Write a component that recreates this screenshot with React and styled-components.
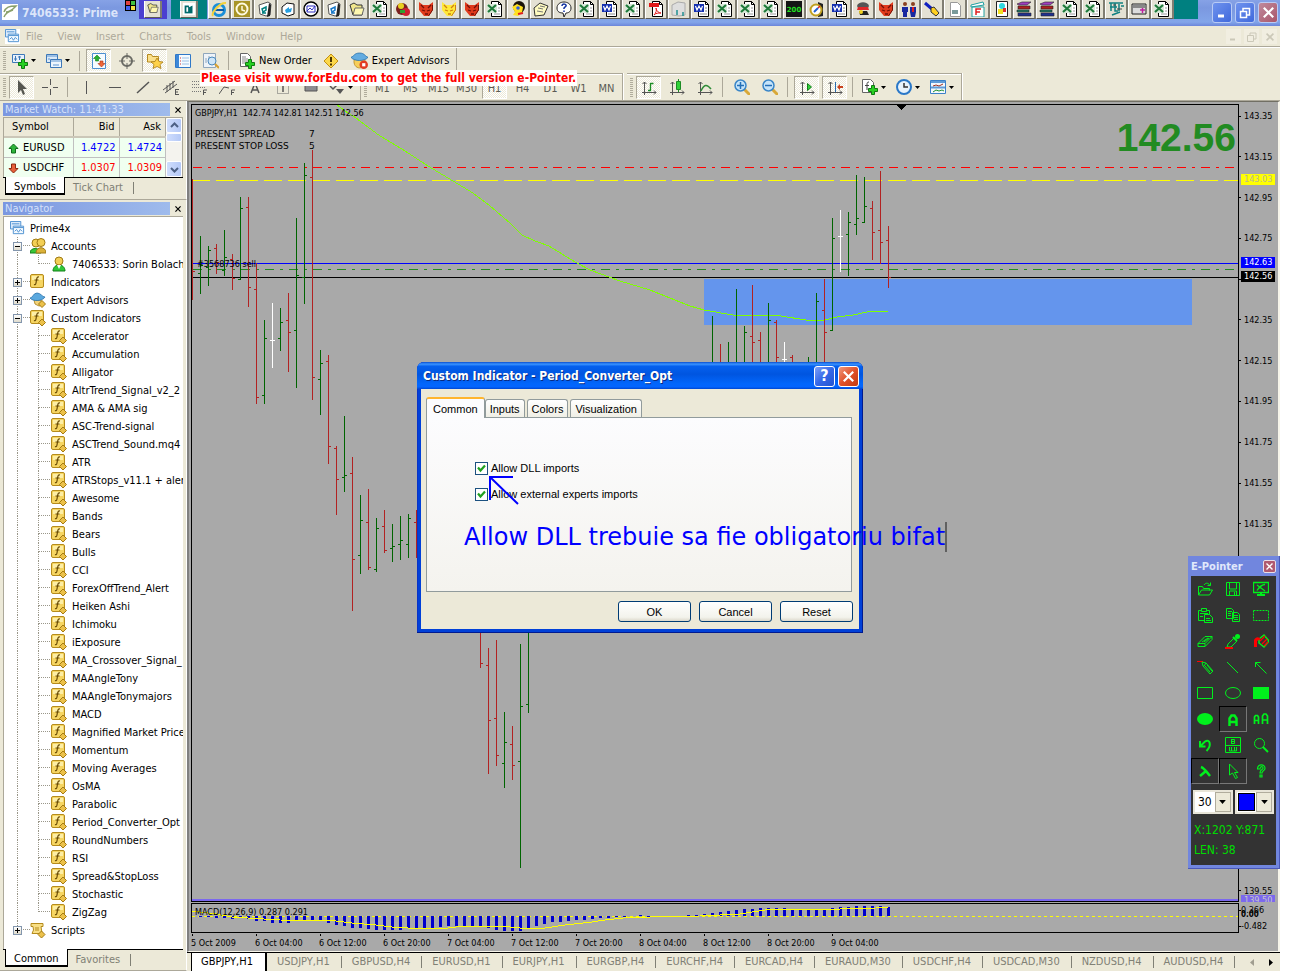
import React from 'react';
import styled, { createGlobalStyle, css } from 'styled-components';

const ui = '"DejaVu Sans Condensed", "DejaVu Sans", sans-serif';
const dialogFont = '"Liberation Sans", Arial, sans-serif';
const face = '#ece9d8';
const shade = '#aca899';

const GlobalStyle = createGlobalStyle`
  *, *::before, *::after { box-sizing: border-box; }
  body { margin: 0; background: #fff; font: 11px/14px ${ui}; color: #000; }
  button, select, input { font: inherit; color: inherit; margin: 0; padding: 0; }
  button { background: none; border: 0; white-space: nowrap; }
  ul { list-style: none; margin: 0; padding: 0; }
`;

/* ---------- shared pieces ---------- */

const Svg = styled.svg`
  display: block;
  flex: none;
  width: ${(p) => p.$w || 16}px;
  height: ${(p) => p.$h || p.$w || 16}px;
`;
const Icon = ({ size = 16, h, box = '0 0 16 16', children }) => (
  <Svg $w={size} $h={h} viewBox={box} fill="none" aria-hidden="true">{children}</Svg>
);

const Page = styled.div`
  position: relative;
  display: flex;
  flex-direction: column;
  min-height: 100vh;
  margin-right: 19px;
  background: ${face};
`;

/* ---------- title bar and shortcut strip ---------- */

const TitleBar = styled.header`
  display: flex;
  align-items: flex-start;
  height: 26px;
  overflow: hidden;
  background: linear-gradient(#86a2e6, #7b98e0 30%, #82a5e9 85%, #6b85da);
`;
const AppBadge = styled.span`
  margin: 4px 4px 0 2px;
  background: #fff;
`;
const AppTitle = styled.h1`
  flex: none;
  width: 101px;
  margin: 4px 0 0;
  overflow: hidden;
  white-space: nowrap;
  font: bold 12px/18px ${ui};
  color: #dbe5fa;
`;
const Strip = styled.nav`
  display: flex;
  flex: none;
  height: 19px;
`;
const StripPad = styled.span`
  display: flex;
  justify-content: center;
  width: ${(p) => p.$w}px;
  margin-right: ${(p) => p.$gap || 0}px;
  background: ${(p) => p.$bg || 'none'};
`;
const StripButton = styled.button`
  display: flex;
  justify-content: center;
  width: ${(p) => (p.$small ? 18 : 23)}px;
  height: ${(p) => (p.$small ? 17 : 19)}px;
  margin-top: ${(p) => (p.$small ? 1 : 0)}px;
  padding-top: 1px;
  background: #e4e1d4;
  border: solid;
  border-width: 0 2px 1px 1px;
  border-color: #fff #807d72 #5d5b55 #fff;
`;
const Captions = styled.div`
  display: flex;
  gap: 3px;
  margin: 2px 2px 0 auto;
`;
const Caption = styled.button`
  display: grid;
  place-items: center;
  width: 20px;
  height: 21px;
  border: 1px solid #b9cbf5;
  border-radius: 3px;
  background: ${(p) => (p.$close ? 'linear-gradient(135deg,#c08a9c,#a9566a)' : 'linear-gradient(135deg,#6f93ee,#4069dc)')};
`;

const Sheet = ({ children }) => (
  <>
    <path d="M4.500.5h7l3 3v12h-10z" fill="#fff" stroke="#000" />
    <path d="M11.500.5v3h3" stroke="#000" />
    {children}
  </>
);
const Fox = ({ a, b }) => (
  <>
    <path d="M1 1l4 3h6l4-3v8l-4 6H6L1 9z" fill={a} />
    <path d="M3 4l3 3M13 4l-3 3M4 9l3 1M12 9l-3 1M7 13h3" stroke={b} strokeWidth="1.300" />
    <path d="M14.500 4v5l-4 6" stroke={b} />
  </>
);
const Bin = ({ c = '#008080' }) => (
  <>
    <path d="M2 4l9-3 3 2-1 11-4 1-6-2z" fill="#fff" stroke="#555" />
    <path d="M12 2l2 2-1 11-3 1z" fill="#222" />
    <path d="M5 8l4-2v3l-3 2zM5 12h4" stroke={c} strokeWidth="1.500" />
  </>
);
const art = {
  ie: (
    <>
      <circle cx="8" cy="9" r="5.500" stroke="#1b8fd8" strokeWidth="3" />
      <path d="M3 9h10" stroke="#0a5aa8" strokeWidth="2" />
      <path d="M2 15C0 12 9 1 15 2" stroke="#f4d13a" strokeWidth="2" />
    </>
  ),
  clock: (
    <>
      <path d="M0 0h16v16H0z" fill="#a89426" />
      <circle cx="8" cy="8" r="5.500" stroke="#fffbe0" strokeWidth="2" />
      <path d="M8 5v4l3 1" stroke="#fffbe0" strokeWidth="1.500" />
    </>
  ),
  bin: <Bin />,
  binBlue: <Bin c="#1878c8" />,
  send: (
    <>
      <path d="M2 6l5-4 7 1v10l-6 2-6-3z" fill="#fff" stroke="#111" />
      <path d="M5 9l4-3v2l3-1-1 4-5 1z" fill="#28a0e0" />
    </>
  ),
  chat: (
    <>
      <circle cx="8" cy="8" r="7" fill="#fff" stroke="#000" strokeWidth="1.500" />
      <path d="M4 5h8v6H4zM4 10l3-3 2 2 3-4" stroke="#3030c0" />
    </>
  ),
  folder: (
    <>
      <path d="M1 4l4-2 3 2h5v10H4z" fill="#f0e68c" stroke="#333" />
      <path d="M4 14l2-7h9l-2 7z" fill="#fff8b0" stroke="#666" />
    </>
  ),
  xls: (
    <Sheet>
      <path d="M0 3h10v9H0z" fill="#d8e8d8" />
      <path d="M1 4l8 7M9 4l-8 7" stroke="#1f7a3a" strokeWidth="2.200" />
      <path d="M11 7h2M11 10h2M7 13h6" stroke="#9a9a9a" />
    </Sheet>
  ),
  doc: (
    <Sheet>
      <path d="M0 3h10v8H0z" fill="#1430b0" />
      <path d="M1.500 5l1.500 4 2-4 2 4 1.500-4" stroke="#fff" strokeWidth="1.200" />
      <path d="M11 7h2M11 10h2M6 13h7" stroke="#888" />
    </Sheet>
  ),
  ball: (
    <>
      <circle cx="7" cy="8" r="6" fill="#7a2020" />
      <circle cx="6" cy="5" r="3" fill="#e8d020" />
      <circle cx="11" cy="11" r="4" fill="#d02030" />
      <path d="M5 9h5v3H5z" fill="#30a030" />
    </>
  ),
  fox: <Fox a="#e03a1c" b="#701008" />,
  yfox: <Fox a="#ffe93a" b="#d08010" />,
  bird: (
    <>
      <circle cx="9" cy="6" r="6" fill="#1a1208" />
      <path d="M2 6l5-3 6 3-1 6-4 3-5-1 2-3z" fill="#ffe020" />
      <circle cx="8" cy="7" r="1.800" fill="#3060e0" />
      <path d="M8 13l5-1" stroke="#e02020" strokeWidth="2" />
    </>
  ),
  note: (
    <>
      <path d="M1 7l6-5 8 3-4 9-9 1z" fill="#fffbc0" stroke="#333" />
      <path d="M5 7l5 1M4 10l6 1M7 5l5 1" stroke="#777" />
    </>
  ),
  help: (
    <>
      <path d="M1 7c0-8 14-8 14 0 0 4-3 5-5 5l-2 4-1-4C4 12 1 11 1 7z" fill="#fff" stroke="#222" />
      <path d="M6 5c0-3 5-2 4 0L8 7v1M8 9.500v1.500" stroke="#1030a0" strokeWidth="1.500" />
    </>
  ),
  pdf: (
    <Sheet>
      <path d="M1 2h10v4H1z" fill="#e01818" />
      <path d="M6 14c2-2 3-5 2-7 0 3 3 5 5 5-3 0-5 0-7 2z" stroke="#e01818" />
    </Sheet>
  ),
  ghost: (
    <>
      <path d="M1 4l6-3 7 1v12l-6 1-7-1z" fill="#dedede" stroke="#aaa" />
      <path d="M6 9v5M12 11v4" stroke="#209090" strokeWidth="1.500" />
    </>
  ),
  two: (
    <>
      <path d="M0 0h16v16H0z" fill="#151515" />
      <text x="8" y="11" textAnchor="middle" fontSize="7" fontWeight="bold" fill="#20e020" fontFamily="DejaVu Sans">200</text>
    </>
  ),
  compass: (
    <>
      <path d="M9 1l5 2v12l-5 1z" fill="#222" />
      <circle cx="7" cy="9" r="5.500" fill="#fff" stroke="#c0a020" strokeWidth="2" />
      <path d="M5 11l4-4" stroke="#2060d0" strokeWidth="2" />
      <path d="M9 7l2-2" stroke="#e02020" strokeWidth="1.500" />
    </>
  ),
  cap: (
    <>
      <path d="M2 5c1-5 11-5 12 0l-2 4H4z" fill="#555" />
      <path d="M3 6h10l1 3H2z" fill="#e02828" />
      <path d="M4 10h8l2 4H5z" fill="#222" />
      <circle cx="6" cy="11" r="2" fill="#f0d020" />
    </>
  ),
  people: (
    <>
      <circle cx="4" cy="3" r="2" fill="#8a4020" />
      <circle cx="12" cy="3" r="2" fill="#8a4020" />
      <path d="M1 6h6v5H6v5H2v-5H1zM9 6h6v5l-1 5h-4l-1-5z" fill="#1828a0" />
      <path d="M12 6v5" stroke="#e02020" strokeWidth="2" />
    </>
  ),
  brush: (
    <>
      <path d="M1 2l7 6" stroke="#1020c0" strokeWidth="3" />
      <path d="M7 7l3-1 5 6-3 3-5-4z" fill="#ffd020" stroke="#333" />
    </>
  ),
  page: (
    <>
      <path d="M3.500 1.500h7l3 3v11h-10z" fill="#fff" stroke="#999" />
      <path d="M5 9h6v4H5z" fill="#7a9a9a" />
    </>
  ),
  film: (
    <>
      <path d="M1 4l12-3 1 3-13 2zM2 6h12v10H2z" fill="#fff" stroke="#20a0a0" />
      <path d="M6 14V8h5M6 11h4" stroke="#e02020" strokeWidth="1.500" />
    </>
  ),
  colors: (
    <>
      <path d="M3.500.5h11v15h-11z" fill="#fff" stroke="#222" />
      <circle cx="9" cy="5" r="3" fill="#30d8e0" />
      <path d="M5 8h5v5H5z" fill="#f0e020" />
      <path d="M10 7h3v4h-3z" fill="#e03030" />
    </>
  ),
  books: (
    <>
      <path d="M1 3l5-2h9l-4 3H3z" fill="#a040c0" stroke="#222" strokeWidth=".6" />
      <path d="M2 5h12v3H2z" fill="#b02020" stroke="#222" strokeWidth=".6" />
      <path d="M1 9h12v2H1z" fill="#20806a" stroke="#222" strokeWidth=".6" />
      <path d="M2 12h13v3H2z" fill="#203090" stroke="#222" strokeWidth=".6" />
    </>
  ),
  net: (
    <>
      <path d="M1 2h14M3 2v8M7 2v8h3M11 3v7M13 5h3M2 6h7M4 14l8-3" stroke="#108080" strokeWidth="1.500" />
      <path d="M5 4h3M9 8h5" stroke="#444" />
    </>
  ),
  card: (
    <>
      <path d="M1 3h14v10H1z" fill="#dcdcdc" stroke="#222" />
      <path d="M2 4h12v3H2z" fill="#888" />
      <path d="M9 9h5M11.500 7v5" stroke="#c020a0" strokeWidth="1.500" />
    </>
  ),
};
const shortcuts = [
  ['Internet Explorer', 'ie'], ['Clock', 'clock'], ['Recycle Bin', 'bin'], ['Send', 'send'], ['Messenger', 'chat'],
  ['Recycle', 'binBlue'], ['Folder', 'folder'], ['Workbook', 'xls'], ['Player', 'ball'], ['Fox', 'fox'], ['Yellow fox', 'yfox'],
  ['Fox 2', 'fox'], ['Workbook 2', 'xls'], ['Bird', 'bird'], ['Notes', 'note'], ['Help', 'help'], ['Workbook 3', 'xls'],
  ['Document', 'doc'], ['Workbook 4', 'xls'], ['PDF', 'pdf'], ['Paper', 'ghost'], ['Document 2', 'doc'], ['Workbook 5', 'xls'],
  ['Workbook 6', 'xls'], ['Workbook 7', 'xls'], ['Meter', 'two'], ['Compass', 'compass'], ['Document 3', 'doc'], ['Agent', 'cap'],
  ['Fox 3', 'fox'], ['People', 'people'], ['Brush', 'brush'], ['Page', 'page'], ['Film', 'film'], ['Colors', 'colors'],
  ['Archive', 'books'], ['Archive 2', 'books'], ['Workbook 8', 'xls'], ['Workbook 9', 'xls'], ['Network', 'net'], ['Card', 'card'],
  ['Workbook 10', 'xls'],
];

/* ---------- menu ---------- */

const MenuBar = styled.nav`
  display: flex;
  align-items: center;
  gap: 15px;
  height: 22px;
  padding: 0 3px 0 5px;
  border-bottom: 1px solid #fff;
  box-shadow: inset 0 -1px ${shade};
  color: ${shade};
`;
const MenuIcon = styled.span`
  margin-right: -9px;
  background: #fff;
`;
const MdiButtons = styled.div`
  display: flex;
  gap: 3px;
  margin-left: auto;
  color: #cbc8b8;
`;
const MdiButton = styled.button`
  display: grid;
  place-items: center;
  width: 15px;
  height: 15px;
  background: #f1eee1;
`;

/* ---------- toolbars ---------- */

const ToolRow = styled.div`
  display: flex;
  gap: ${(p) => p.$gap || 0}px;
  height: ${(p) => p.$h}px;
`;
const ToolGroup = styled.div`
  display: flex;
  align-items: center;
  gap: 3px;
  padding: 0 3px;
  ${(p) => p.$raised && css`
    border-top: 1px solid ${shade};
    box-shadow: inset 0 1px #fff;
  `}
  border-right: 1px solid ${shade};
`;
const ToolSet = styled.div`
  display: flex;
  border-right: 1px solid #fff;
`;
const Grip = styled.span`
  width: 3px;
  height: 19px;
  background: repeating-linear-gradient(#b0ac9c 0 1px, ${face} 1px 2px);
`;
const Sep = styled.span`
  width: 2px;
  height: 20px;
  margin: 0 2px;
  border-left: 1px solid ${shade};
`;
const Tool = styled.button`
  display: flex;
  align-items: center;
  justify-content: ${(p) => (p.$drop ? 'flex-start' : 'center')};
  gap: 3px;
  width: ${(p) => (p.$drop ? 31 : 25)}px;
  height: 23px;
  padding-top: ${(p) => (p.$text ? 3 : 0)}px;
  padding-left: ${(p) => (p.$drop ? 3 : 0)}px;
  color: #5a5a54;
  ${(p) => p.$on && css`
    background: repeating-conic-gradient(#fff 0 25%, ${face} 0 50%) 0 0 / 2px 2px;
    border: 1px solid;
    border-color: ${shade} #fff #fff ${shade};
  `}
`;
const WideTool = styled.button`
  display: flex;
  align-items: center;
  gap: 4px;
  height: 23px;
  padding: 0 4px;
`;
const Banner = styled.div`
  position: absolute;
  top: 70px;
  left: 200px;
  padding: 0 1px;
  white-space: nowrap;
  background: #fff;
  color: #f00;
  font: bold 12px/16px ${ui};
`;

const Arrow = () => (
  <Icon size={5} h={3} box="0 0 5 3"><path d="M0 0h5L2.500 3z" fill="#000" /></Icon>
);
const Plus = ({ x = 6, y = 6 }) => (
  <path transform={`translate(${x} ${y})`} d="M3.500.5h3v3h3v3h-3v3h-3v-3h-3v-3h3z" fill="#27d021" stroke="#0e7a10" />
);
const Axes = ({ children }) => (
  <>
    <path d="M3.500 16V3M1.500 5l2-2 2 2M1 13.500h14M13 11.500l2 2-2 2" stroke="#555" />
    {children}
  </>
);
const ToolIcon = ({ n, size }) => <Icon size={size || 16}>{tools[n]}</Icon>;
const tools = {
  chartPlus: (
    <>
      <path d="M.5 1.500h12v8H.5z" fill="#e6f0fb" stroke="#3d78b8" />
      <path d="M3.500 3v5M7.500 3v4M2 6h3M6 4h3" stroke="#3d78b8" />
      <Plus />
    </>
  ),
  profiles: (
    <>
      <path d="M.5 1.500h11v8H.5z" fill="#d9e9f9" stroke="#3d78b8" />
      <path d="M4.500 6.500h11v8h-11z" fill="#eef6fd" stroke="#3d78b8" />
      <path d="M1 3h10M5 8h10M7 12h6M2 6h2" stroke="#5c94d0" />
    </>
  ),
  market: (
    <>
      <path d="M1.500.5h13v15h-13z" fill="#f6fbff" stroke="#4b8fd0" />
      <path d="M6 2L2.500 5.500h2v2.500h3V5.500h2z" fill="#28b030" stroke="#128018" strokeWidth=".6" />
      <path d="M10.500 14L7 10.500h2V8h3v2.500h2z" fill="#f0683a" stroke="#a83010" strokeWidth=".6" />
    </>
  ),
  target: (
    <>
      <circle cx="8" cy="8" r="5" stroke="#6a6a64" strokeWidth="2" />
      <path d="M8 0v6M8 10v6M0 8h6M10 8h6" stroke="#6a6a64" />
    </>
  ),
  nav: (
    <>
      <path d="M.5 9V1.500h4l1 2h6V9z" fill="#fbe08a" stroke="#b58a20" />
      <path d="M10 5l2 3.500 4 .5-3 2.500 1 4-4-2-4 2 1-4-3-2.500 4-.5z" fill="#ffd24a" stroke="#a87b14" strokeWidth=".8" />
    </>
  ),
  terminal: (
    <>
      <path d="M.5 1.500h15v13H.5z" fill="#f4faff" stroke="#2f78c8" />
      <path d="M1 2h3v12H1z" fill="#3d88d8" />
      <path d="M7 5h7M7 8h7M7 11h7" stroke="#9ac0e6" />
      <path d="M5 5h1M5 8h1M5 11h1" stroke="#d03030" />
    </>
  ),
  tester: (
    <>
      <path d="M.5.5h12v14H.5z" fill="#eef3f8" stroke="#8fa6bc" />
      <path d="M3 5v5M6 3v4M9 4v6" stroke="#8fa6bc" />
      <circle cx="9" cy="8" r="4" fill="#cfe6f8" stroke="#4a88bc" />
      <path d="M12 11l4 4" stroke="#d8a030" strokeWidth="2" />
    </>
  ),
  order: (
    <>
      <path d="M1.500.5h7l3 3v10h-10z" fill="#fff" stroke="#666" />
      <path d="M3 4h4M3 6h6M3 8h6M3 10h3" stroke="#888" />
      <Plus />
    </>
  ),
  warn: (
    <>
      <path d="M8 1l7 7-7 7-7-7z" fill="#fcd84a" stroke="#c39012" strokeLinejoin="round" />
      <path d="M8 4v5M8 10.500v2" stroke="#4a3500" strokeWidth="2" />
    </>
  ),
  expert: (
    <>
      <path d="M3 7h10c1 5-2 8-5 8s-6-3-5-8z" fill="#f7cf5a" stroke="#b98a20" strokeWidth=".8" />
      <path d="M0 5c3-1 3-4 8-4s5 3 8 4c-3 4-13 4-16 0z" fill="#63ace0" stroke="#2c74ac" strokeWidth=".8" />
      <circle cx="12" cy="12" r="4" fill="#e23b22" />
      <path d="M10.500 10.500h3v3h-3z" fill="#fff" />
    </>
  ),
  cursor: <path d="M4 1v13l3-3 2 5 2-1-2-5h4z" fill="#55554f" />,
  cross: <path d="M8.500 0v6M8.500 10v6M0 8.500h6M11 8.500h5" stroke="#555" />,
  vline: <path d="M7.500 2v13" stroke="#555" />,
  hline: <path d="M2 8.500h12" stroke="#555" />,
  slash: <path d="M2 14L14 3" stroke="#555" strokeWidth="1.500" />,
  channel: (
    <>
      <path d="M0 11L12 2M2 14L14 5M4 6v7M7 4v7M10 2v7" stroke="#555" />
      <path d="M12 10.500h4M12 13h3M12 15.500h4M12.500 10v6" stroke="#555" />
    </>
  ),
  fib: (
    <>
      <path d="M1 2.500h14M1 5.500h14M1 8.500h14M1 12.500h9" stroke="#777" strokeDasharray="1 1" />
      <path d="M12.500 16v-5h4M12 13.500h3" stroke="#555" />
    </>
  ),
  fan: (
    <>
      <path d="M3 5.500h13" stroke="#777" strokeDasharray="1 1" />
      <path d="M0 15l5-7 5 1M12.500 16v-5h4M12 13.500h3" stroke="#555" />
    </>
  ),
  letter: <path d="M4 14l4-10 4 10M5.500 11h5" stroke="#555" strokeWidth="1.500" />,
  label: (
    <>
      <path d="M2.500 3.500h11v11h-11z" stroke="#666" strokeDasharray="1 1" />
      <path d="M8 6v7M6 6h4" stroke="#555" strokeWidth="1.500" />
    </>
  ),
  rect: <path d="M2 4h12v8H2z" fill="#8c8c90" stroke="#555" />,
  marks: (
    <>
      <path d="M1 7l3 3 6-6" stroke="#555" strokeWidth="1.500" />
      <path d="M7 10h8l-4 5z" fill="#555" />
    </>
  ),
  bars: <Axes><path d="M9.500 4v8M9.500 4.500h3M7 11.500h3" stroke="#1c8c24" strokeWidth="1.300" /></Axes>,
  candle: <Axes><path d="M9.500 0v13" stroke="#1c8c24" /><path d="M7.500 2.500h4v8h-4z" fill="#2fd238" stroke="#1c8c24" /></Axes>,
  line: <Axes><path d="M4 12c3-7 6-7 10-2" stroke="#2f8c38" strokeWidth="1.500" /></Axes>,
  zoomIn: (
    <>
      <path d="M10 10l6 6" stroke="#d8a838" strokeWidth="3" />
      <circle cx="6.500" cy="6.500" r="5.500" fill="#c5e4fa" stroke="#3a86c8" strokeWidth="1.500" />
      <path d="M3 6.500h7M6.500 3v7" stroke="#2470b8" strokeWidth="1.500" />
    </>
  ),
  zoomOut: (
    <>
      <path d="M10 10l6 6" stroke="#d8a838" strokeWidth="3" />
      <circle cx="6.500" cy="6.500" r="5.500" fill="#c5e4fa" stroke="#3a86c8" strokeWidth="1.500" />
      <path d="M3 6.500h7" stroke="#2470b8" strokeWidth="1.500" />
    </>
  ),
  scroll: <Axes><path d="M8.500 4.500v7l4-3.500z" fill="#2fd238" stroke="#128018" /></Axes>,
  shift: <Axes><path d="M8.500 3v10" stroke="#2a6cb0" /><path d="M10 8l3-3v2h3v2h-3v2z" fill="#c8401c" /></Axes>,
  indicator: (
    <>
      <path d="M.5.5h8l3 3v10H.5z" fill="#fff" stroke="#666" />
      <path d="M7 3c-2 0-2 1-2 3v5M3 6.500h4" stroke="#444" />
      <Plus />
    </>
  ),
  time: (
    <>
      <circle cx="8" cy="8" r="7" fill="#e8f3fc" stroke="#2a78c8" strokeWidth="2" />
      <path d="M8 4v4h4" stroke="#333" strokeWidth="1.500" />
    </>
  ),
  template: (
    <>
      <path d="M.5 1.500h15v13H.5z" fill="#f3f8fd" stroke="#3b80c8" />
      <path d="M1 3h14M1 8.500h14" stroke="#5f9cd8" strokeWidth="2" />
      <path d="M3 7l3-1 3 1 4-2" stroke="#a03020" />
      <path d="M3 13l3-2 3 1 3-1 2 1" stroke="#209030" />
    </>
  ),
};

const T = ({ n, on, drop, label }) => (
  <Tool type="button" $on={on} $drop={drop} aria-label={label || n} aria-pressed={on}>
    <ToolIcon n={n} />
    {drop && <Arrow />}
  </Tool>
);

/* ---------- left column ---------- */

const Workspace = styled.main`
  display: flex;
  flex: 1;
  border-top: 1px solid ${shade};
`;
const Side = styled.aside`
  display: flex;
  flex-direction: column;
  flex: none;
  width: 187px;
`;
const Panel = styled.section`
  display: flex;
  flex-direction: column;
  flex: ${(p) => (p.$grow ? 1 : 'none')};
  padding: 2px 3px;
  border-bottom: 1px solid ${shade};
  border-right: 1px solid #fff;
`;
const PanelHead = styled.div`
  display: flex;
  align-items: center;
  justify-content: space-between;
  margin: 0 -1px 1px 0;
`;
const PanelTitle = styled.h2`
  flex: none;
  width: 167px;
  margin: 0;
  padding-left: 2px;
  font: 11px/13px ${ui};
  color: #d5e1fa;
  background: linear-gradient(90deg, #7b97e0, #9fbbec);
`;
const PanelClose = styled.button`
  display: grid;
  place-items: center;
  width: 12px;
  height: 12px;
`;
const Quotes = styled.div`
  display: flex;
  border: solid ${shade};
  border-width: 1px 1px 0;
`;
const Table = styled.table`
  flex: 1;
  border-collapse: collapse;
  table-layout: fixed;
  background: #f0fff0;
  th {
    height: 19px;
    padding: 0 4px;
    font-weight: normal;
    text-align: right;
    background: ${face};
    border-right: 1px solid ${shade};
    border-bottom: 2px solid #cbc7b8;
  }
  th:first-child { width: 69px; padding-left: 8px; text-align: left; }
  th:nth-child(2) { width: 46px; }
  td {
    height: 20px;
    padding: 2px 3px 0 0;
    text-align: right;
    border-right: 1px solid #c0c0c0;
    border-bottom: 1px solid #c0c0c0;
  }
  tbody tr:last-child td { border-bottom: 0; }
`;
const Price = styled.td`
  color: ${(p) => (p.$up ? '#00f' : '#f00')};
`;
const Pair = styled.span`
  display: flex;
  align-items: center;
  gap: 4px;
  padding-left: 4px;
`;
const Scroll = styled.div`
  display: flex;
  flex-direction: column;
  width: 16px;
  background: #f4f3ee;
`;
const ScrollPart = styled.button`
  display: grid;
  place-items: center;
  height: ${(p) => p.$h}px;
  margin-top: ${(p) => (p.$end ? 'auto' : 0)};
  border: 1px solid #fff;
  border-radius: 2px;
  background: linear-gradient(90deg, #cfddfd, #b4c8f6);
`;
const Tabs = styled.div`
  display: flex;
  align-items: flex-start;
  height: ${(p) => p.$h}px;
  padding-left: 2px;
  border-top: 1px solid #000;
  color: #808075;
`;
const SideTab = styled.button`
  height: 18px;
  padding: 2px 8px 0;
  ${(p) => p.$on && css`
    margin-top: -1px;
    padding: 3px 8px 0;
    color: #000;
    background: #fff;
    border: solid #000;
    border-width: 0 1px 2px 1px;
  `}
`;
const Tick = styled.span`
  width: 1px;
  height: 12px;
  margin: 4px 0 0 2px;
  background: #808075;
`;
const Tree = styled.ul`
  flex: 1;
  padding-top: 2px;
  background: #fff;
  border: solid ${shade};
  border-width: 1px 0 0 1px;
`;
const Branch = styled.li`
  display: flex;
  align-items: center;
  height: 18px;
  padding-left: ${(p) => (p.$root ? 6 : 0)}px;
  white-space: nowrap;
  overflow: hidden;
  width: 179px;
`;
const Guide = styled.span`
  position: relative;
  display: grid;
  flex: none;
  grid-template-rows: 9px 9px;
  width: ${(p) => (p.$deep ? 12 : 13)}px;
  margin-left: ${(p) => (p.$deep ? 8 : 13)}px;
  margin-right: ${(p) => (p.$deep ? 1 : 0)}px;
  &::before {
    content: '';
    border-left: 1px dotted #9a978a;
    border-bottom: ${(p) => (p.$tick ? '1px dotted #9a978a' : '0')};
  }
  &::after {
    content: '';
    border-left: ${(p) => (p.$end ? '0' : '1px dotted #9a978a')};
  }
`;
const Expander = styled.button`
  position: absolute;
  top: 5px;
  left: -4px;
  width: 9px;
  height: 9px;
  background: linear-gradient(#fff, #dedacb);
  border: 1px solid #8396ad;
`;
const NodeName = styled.span`
  margin-left: 5px;
  padding-top: 2px;
  line-height: 16px;
`;

const fx = (
  <>
    <rect x=".5" y=".5" width="13" height="13" rx="1.500" fill="#f6d562" stroke="#b58b1c" />
    <path d="M2 2h10v4H2z" fill="#fdeea6" />
    <path d="M9 3c-2-.5-2 1-2.500 3L6 9c-.3 1.500-1 2-2 1.500M4.500 6h4" stroke="#6a4c05" strokeWidth="1.200" />
  </>
);
const nodeIcons = {
  root: (
    <>
      <path d="M.5.5h11v8H.5z" fill="#dcebfb" stroke="#4c8fd0" />
      <path d="M3.500 5.500h11v8h-11z" fill="#f4faff" stroke="#4c8fd0" />
      <path d="M2 3h8M4 7h10M5 11l2-2 2 3 2-3 2 2" stroke="#4c8fd0" />
    </>
  ),
  accounts: (
    <>
      <circle cx="6" cy="5" r="4" fill="#f3cf56" stroke="#a07a14" />
      <path d="M0 15c0-6 10-6 11 0z" fill="#38c838" stroke="#148018" />
      <circle cx="11" cy="4.500" r="4" fill="#f3cf56" stroke="#a07a14" />
      <path d="M6 15c0-7 10-7 10 0z" fill="#dbb23a" stroke="#a07a14" />
    </>
  ),
  user: (
    <>
      <path d="M2 15c0-8 12-8 12 0z" fill="#30c838" stroke="#128018" />
      <circle cx="8" cy="5" r="4" fill="#f3cf56" stroke="#a07a14" />
      <path d="M6 9l2 4 2-4z" fill="#fff" />
    </>
  ),
  plain: fx,
  custom: (
    <>
      {fx}
      <path d="M12 9l3.500 3.500L12 16l-3.500-3.500z" fill="#ecc14a" stroke="#a67c12" />
    </>
  ),
  hat: (
    <>
      <path d="M4 8h7l2 5-4 1-4-2z" fill="#f2d27a" stroke="#a67c12" strokeWidth=".8" />
      <path d="M0 6c3 0 3-5 7-5s5 4 8 4c-2 4-12 5-15 1z" fill="#5aa8de" stroke="#2c74ac" strokeWidth=".8" />
      <path d="M12 8.500l3.500 3.500L12 15.500 8.500 12z" fill="#ecc14a" stroke="#a67c12" />
    </>
  ),
  script: (
    <>
      <path d="M1 1.500h12v3h-2l1 7H2l1.500-3.500L3 4.500H1z" fill="#f8df86" stroke="#b58b1c" />
      <path d="M5 6h4M5 8h4" stroke="#b58b1c" />
      <path d="M11.500 9L15 12.500 11.500 16 8 12.500z" fill="#ecc14a" stroke="#a67c12" />
    </>
  ),
};
const indicators = ['Accelerator', 'Accumulation', 'Alligator', 'AltrTrend_Signal_v2_2', 'AMA & AMA sig', 'ASC-Trend-signal',
  'ASCTrend_Sound.mq4', 'ATR', 'ATRStops_v11.1 + alert', 'Awesome', 'Bands', 'Bears', 'Bulls', 'CCI', 'ForexOffTrend_Alert',
  'Heiken Ashi', 'Ichimoku', 'iExposure', 'MA_Crossover_Signal_', 'MAAngleTony', 'MAAngleTonymajors', 'MACD',
  'Magnified Market Price', 'Momentum', 'Moving Averages', 'OsMA', 'Parabolic', 'Period_Converter_Opt', 'RoundNumbers', 'RSI',
  'Spread&StopLoss', 'Stochastic', 'ZigZag'];

const Sign = ({ plus }) => (
  <Icon size={7} box="0 0 7 7"><path d={plus ? 'M1 3.500h5M3.500 1v5' : 'M1 3.500h5'} stroke="#000" /></Icon>
);
const Folder = ({ name, icon, plus, end }) => (
  <Branch>
    <Guide $tick $end={end}>
      <Expander type="button" aria-label={`Toggle ${name}`}><Sign plus={plus} /></Expander>
    </Guide>
    <Icon>{nodeIcons[icon]}</Icon>
    <NodeName>{name}</NodeName>
  </Branch>
);
const Leaf = ({ name, icon, end }) => (
  <Branch>
    <Guide />
    <Guide $deep $tick $end={end} />
    <Icon>{nodeIcons[icon]}</Icon>
    <NodeName>{name}</NodeName>
  </Branch>
);
const CloseX = ({ c = '#000', s = 7 }) => (
  <Icon size={s} box="0 0 7 7"><path d="M.5.5l6 6M6.500.5l-6 6" stroke={c} strokeWidth="1.400" /></Icon>
);

/* ---------- chart ---------- */

const Desk = styled.div`
  display: flex;
  flex: 1;
  min-width: 0;
  flex-direction: column;
`;
const ChartWindow = styled.section`
  display: grid;
  flex: 1;
  grid-template-columns: 1fr 39px;
  grid-template-rows: 1fr 30px 17px;
  row-gap: 1px;
  padding: 2px 0 0 2px;
  border: solid;
  border-width: 1px 2px 1px 2px;
  border-color: #716f64 #f7f5ea #f7f5ea #808080;
  background: #a9a9a9;
`;
const Plot = styled.div`
  position: relative;
  overflow: hidden;
  border: 1px solid #000;
`;
const Drawing = styled.svg`
  position: absolute;
  inset: 0;
  width: 100%;
  height: 100%;
`;
const PlotHead = styled.div`
  position: relative;
  display: flex;
  justify-content: space-between;
  padding: 2px 2px 0 3px;
`;
const Legend = styled.div`
  font: 9px/12px ${ui};
  white-space: pre;
`;
const Spread = styled.div`
  display: grid;
  grid-template-columns: 114px auto;
  justify-content: start;
  margin-top: 9px;
  font: 9px/12px "DejaVu Sans", sans-serif;
`;
const BigPrice = styled.strong`
  margin-top: 11px;
  font: bold 39px/40px "Liberation Sans", Arial, sans-serif;
  color: #228b22;
`;
const Scale = styled.div`
  position: relative;
  display: flex;
  flex-direction: column;
  justify-content: space-between;
  overflow: hidden;
  padding: ${(p) => (p.$flat ? '2px 0' : '6px 0 5px')};
  font: 9px/12px ${ui};
`;
const Mark = styled.span`
  display: flex;
  align-items: center;
  gap: ${(p) => (p.$tight ? 0 : 3)}px;
  height: ${(p) => (p.$tight ? 10 : 12)}px;
  &::before {
    content: '';
    width: 2px;
    height: 1px;
    background: #000;
  }
`;
const Tag = styled.span`
  position: absolute;
  left: 2px;
  top: ${(p) => p.$y}px;
  width: 34px;
  height: 11px;
  padding-left: 3px;
  line-height: 11px;
  background: ${(p) => p.$bg};
  color: ${(p) => p.$fg || '#c8c8c8'};
`;
const ZeroMark = styled.b`
  position: absolute;
  top: 6px;
  left: 2px;
  font: bold 8px/12px ${ui};
`;
const Times = styled.div`
  display: flex;
  grid-column: 1 / -1;
  overflow: hidden;
  font: 9px/15px ${ui};
`;
const Time = styled.span`
  flex: none;
  width: 64px;
  white-space: nowrap;
  &::before {
    content: '';
    display: block;
    width: 1px;
    height: 2px;
    margin-left: 1px;
    background: #000;
  }
`;
const ChartTabs = styled.div`
  display: flex;
  align-items: stretch;
  height: 19px;
  padding-left: 4px;
  border-top: 1px solid #000;
  color: #808075;
  overflow: hidden;
`;
const ChartTab = styled.button`
  flex: none;
  display: flex;
  align-items: center;
  padding: 0 0 0 10px;
  &::after {
    content: '';
    width: 1px;
    height: 12px;
    margin-left: 11px;
    background: #808075;
  }
  ${(p) => p.$on && css`
    margin-top: -1px;
    padding: 0 12px 0 9px;
    color: #000;
    background: #fff;
    border: solid #000;
    border-width: 0 2px 0 1px;
    &::after { display: none; }
  `}
`;
const Pager = styled.div`
  display: flex;
  gap: 15px;
  align-items: center;
  margin: 0 7px 0 auto;
`;

const G = '#006400';
const R = '#b22222';
const W = '#fff';
/* [x, high, low, open, close, colour] */
const candles = [
  [192, 179, 300, 0, 271, R], [200, 236, 294, 273, 265, G], [208, 246, 286, 267, 250, G], [216, 244, 274, 248, 262, R],
  [224, 230, 276, 270, 257, G], [232, 254, 290, 259, 278, R], [240, 197, 280, 279, 208, G], [248, 197, 307, 207, 287, R],
  [256, 263, 404, 289, 397, R], [264, 320, 404, 395, 338, G], [272, 303, 368, 340, 340, W], [280, 308, 351, 338, 322, G],
  [288, 293, 372, 320, 332, R], [296, 218, 388, 330, 275, G], [304, 163, 304, 277, 175, G], [312, 150, 400, 177, 377, R],
  [320, 350, 415, 379, 363, G], [328, 355, 464, 361, 446, R], [336, 446, 515, 448, 479, R], [344, 416, 492, 477, 475, G],
  [352, 457, 611, 473, 559, R], [360, 495, 574, 555, 520, G], [368, 489, 570, 522, 567, R], [376, 518, 572, 569, 528, G],
  [384, 510, 553, 526, 550, R], [392, 524, 562, 548, 546, G], [400, 516, 560, 544, 540, G], [408, 514, 558, 544, 518, G],
  [416, 510, 558, 522, 0, R], [480, 600, 668, 0, 663, R], [488, 648, 774, 665, 720, R], [496, 640, 766, 718, 755, R],
  [504, 712, 788, 763, 742, G], [512, 726, 780, 744, 765, R], [520, 644, 868, 761, 706, G], [528, 600, 713, 704, 0, G],
  [712, 316, 400, 0, 0, G], [720, 344, 400, 0, 0, R], [728, 342, 400, 0, 0, G], [736, 289, 400, 0, 0, G],
  [744, 326, 400, 0, 332, G], [752, 285, 400, 336, 342, R], [760, 332, 400, 340, 0, R], [768, 303, 400, 0, 320, G],
  [776, 320, 400, 322, 357, R], [784, 342, 400, 359, 359, W], [792, 355, 400, 357, 0, R], [808, 357, 400, 0, 0, G],
  [816, 293, 400, 0, 301, G], [824, 279, 400, 310, 332, R], [832, 218, 331, 330, 238, G], [840, 210, 272, 236, 236, W],
  [848, 212, 276, 234, 222, G], [856, 175, 235, 224, 218, G], [864, 177, 223, 222, 206, G], [872, 201, 260, 208, 232, R],
  [880, 171, 264, 230, 242, R], [888, 226, 288, 240, 277, R],
];
const average = '336,104 345,111 356,118 380,136 402,149 428,166 453,181 473,193 490,206 510,223 522,235 535,241 549,246 575,262 590,270 620,281 650,290 690,306 704,310 733,315 757,315 781,316 806,320 825,320 837,317 853,315 867,312 888,311';
/* histogram extent below (+) or above (-) the zero line, one bar every 8 px */
const macd = [1, 1, 2, 2, 3, 2, 3, 5, 5, 7, 7, 7, 5, 4, 4, 4, 7, 9, 10, 12, 12, 13, 14, 14, 14, 14, 12, 12, 12, 12, 11, 10, 10,
  10, 10, 10, 12, 14, 15, 15, 15, 12, 10, 8, 6, 6, 5, 4, 4, 3, 2, 2, 1, 1, 0, -1, 1, 0, 0, 0, 0, -1, -1, -2, -3, -4, -5, -6, -7,
  -7, -8, -8, -8, -8, -6, -6, -6, -6, -6, -8, -9, -9, -10, -10, -10, -10, -9];
const signal = '192,912 216,915 232,918 264,920 280,921 336,922 352,924 376,926 392,928 408,929 448,929 464,927 500,927 520,929 545,929 565,926 592,923 605,921 632,918 650,918 700,917 740,915 765,911 784,910 840,910 876,909 888,908';
const times = ['5 Oct 2009', '6 Oct 04:00', '6 Oct 12:00', '6 Oct 20:00', '7 Oct 04:00', '7 Oct 12:00', '7 Oct 20:00', '8 Oct 04:00',
  '8 Oct 12:00', '8 Oct 20:00', '9 Oct 04:00'];
const charts = ['GBPJPY,H1', 'USDJPY,H1', 'GBPUSD,H4', 'EURUSD,H1', 'EURJPY,H1', 'EURGBP,H4', 'EURCHF,H4', 'EURCAD,H4',
  'EURAUD,M30', 'USDCHF,H4', 'USDCAD,M30', 'NZDUSD,H4', 'AUDUSD,H4'];

const PriceDrawing = () => (
  <Drawing shapeRendering="crispEdges" fill="none">
    <line x1="1" x2="100%" y1="62.500" y2="62.500" stroke="#f00" strokeDasharray="9 6 3 6" />
    <line x1="0" x2="100%" y1="75.500" y2="75.500" stroke="#ff0" strokeDasharray="18 6" />
    <line x1="0" x2="100%" y1="158.500" y2="158.500" stroke="#00f" />
    <line x1="1" x2="100%" y1="164.500" y2="164.500" stroke="#228b22" strokeDasharray="9 6 3 6" />
    <line x1="0" x2="100%" y1="172.500" y2="172.500" stroke="#000" />
    <line x1="0" x2="100%" y1="100%" y2="100%" stroke="#7b68ee" strokeWidth="4" />
    <g transform="translate(-192 -105)">
      <path d="M704 279h488v46H704z" fill="#6495ed" />
      <polyline points={average} stroke="#7fff00" />
      {candles.map(([x, hi, lo, o, c, color]) => (
        <path
          key={x}
          d={`M${x + 0.5} ${hi}V${lo}${o ? `M${x - 2} ${o + 0.5}h3` : ''}${c ? `M${x} ${c + 0.5}h3` : ''}`}
          stroke={color}
        />
      ))}
      <path d="M896 105h10l-5 5z" fill="#000" />
      <text x="197" y="267" fontSize="9" fill="#000" fontFamily="DejaVu Sans Condensed" shapeRendering="auto">#3568736 sell</text>
    </g>
  </Drawing>
);
const MacdDrawing = () => (
  <Drawing shapeRendering="crispEdges" fill="none">
    <line x1="0" x2="100%" y1="12.500" y2="12.500" stroke="#ff0" strokeDasharray="3 3" />
    <g transform="translate(-192 -905)">
      {macd.map((v, i) => (
        <path key={i} d={`M${200.5 + i * 8} 917V${917 + v}`} stroke="#0000cd" strokeWidth="3" />
      ))}
      <polyline points={signal} stroke="#ff0" />
    </g>
  </Drawing>
);

/* ---------- dialog ---------- */

const Dialog = styled.section`
  position: absolute;
  top: 362px;
  left: 417px;
  display: flex;
  flex-direction: column;
  width: 446px;
  height: 271px;
  padding: 0 4px 4px;
  background: #0040d8;
  border-radius: 7px 7px 0 0;
  box-shadow: inset -1px -1px #001a90, inset 1px 0 #0831c8;
`;
const DialogHead = styled.div`
  display: flex;
  align-items: center;
  gap: 3px;
  height: 28px;
  margin: 0 -4px;
  padding: 1px 4px 0 6px;
  border-radius: 7px 7px 0 0;
  background: linear-gradient(#0a4fd0, #3a93ff 8%, #0560ee 16%, #0055e0 45%, #0266fb 80%, #0365ff 92%, #0046d0);
`;
const DialogTitle = styled.h2`
  flex: 1;
  margin: 0;
  font: bold 12px/16px ${ui};
  color: #fff;
  text-shadow: 1px 1px #0a2a80;
`;
const DialogButton = styled.button`
  display: grid;
  place-items: center;
  width: 21px;
  height: 21px;
  border: 1px solid #fff;
  border-radius: 3px;
  font: bold 16px/18px ${ui};
  color: #fff;
  background: ${(p) => (p.$close ? 'linear-gradient(135deg,#f0987c,#e0512a 50%,#c23a10)' : 'linear-gradient(135deg,#7ea0f8,#3468e8 50%,#2453d0)')};
`;
const DialogBody = styled.div`
  display: flex;
  flex: 1;
  flex-direction: column;
  padding: 8px 6px 7px 5px;
  background: ${face};
  font-family: ${dialogFont};
`;
const DialogTabs = styled.div`
  display: flex;
  align-items: flex-end;
  gap: 2px;
  height: 20px;
`;
const DialogTab = styled.button`
  height: ${(p) => (p.$on ? 21 : 18)}px;
  padding: 0 4px;
  border: 1px solid #919b9c;
  border-bottom: 0;
  border-radius: 3px 3px 0 0;
  background: linear-gradient(#fff, #f0efe6);
  ${(p) => p.$on && css`
    position: relative;
    margin: 0 -2px -1px 0;
    padding: 0 6px;
    border-top: 2px solid #ffb52e;
    background: #fcfcfe;
  `}
`;
const TabPage = styled.div`
  display: flex;
  flex-direction: column;
  gap: 12px;
  height: 175px;
  margin-right: 1px;
  padding: 43px 0 0 48px;
  border: 1px solid #919b9c;
  background: linear-gradient(#fcfcfe, #f4f3ee);
`;
const Check = styled.label`
  display: flex;
  align-items: center;
  gap: 3px;
  height: 14px;
`;
const Box = styled.input`
  appearance: none;
  width: 13px;
  height: 13px;
  border: 1px solid #1c5180;
  background: #fff;
`;
const CheckCell = styled.span`
  position: relative;
  display: flex;
  svg { position: absolute; top: 2px; left: 2px; pointer-events: none; }
`;
const DialogActions = styled.div`
  display: flex;
  justify-content: flex-end;
  gap: 8px;
  margin-top: 9px;
`;
const PushButton = styled.button`
  width: 73px;
  height: 21px;
  border: 1px solid #003c74;
  border-radius: 3px;
  background: linear-gradient(#fff, #f3f3ec 80%, #dcd8cb);
`;
const Note = styled.div`
  position: absolute;
  top: 522px;
  left: 464px;
  border-right: 2px solid #606060;
  white-space: nowrap;
  font: 24px/30px "DejaVu Sans", sans-serif;
  color: #00f;
`;
const Pointer = styled.div`
  position: absolute;
  top: 474px;
  left: 486px;
`;
const CheckBox = ({ children }) => (
  <Check>
    <CheckCell>
      <Box type="checkbox" defaultChecked />
      <Icon size={9} box="0 0 9 9"><path d="M1 3.500l2.500 3L8 1.500" stroke="#21a121" strokeWidth="2.200" /></Icon>
    </CheckCell>
    {children}
  </Check>
);

/* ---------- floating palette ---------- */

const Palette = styled.section`
  position: absolute;
  top: 556px;
  right: 0;
  width: 92px;
  height: 313px;
  padding: 0 3px 3px;
  background: #7186de;
  border-bottom: 1px solid #4a58b8;
  border-right: 1px solid #4a58b8;
`;
const PaletteHead = styled.div`
  display: flex;
  align-items: center;
  justify-content: space-between;
  height: 20px;
  color: #e0e8fb;
`;
const PaletteTitle = styled.h2`
  margin: 0;
  padding-top: 2px;
  font: bold 11px/16px ${ui};
`;
const PaletteClose = styled.button`
  display: grid;
  place-items: center;
  width: 13px;
  height: 13px;
  border: 1px solid #e8dfe8;
  border-radius: 2px;
  background: #b05a70;
`;
const PaletteBody = styled.div`
  height: 289px;
  background: #333;
  color: #0d0;
`;
const PaletteGrid = styled.div`
  display: grid;
  grid-template-columns: repeat(3, 28px);
  grid-auto-rows: 26px;
`;
const PaletteTool = styled.button`
  display: grid;
  place-items: center;
  border: 1px solid transparent;
  ${(p) => p.$on && css`border-color: #000 #777 #777 #000;`}
`;
const Combos = styled.div`
  display: flex;
  gap: 2px;
  padding: 6px 2px;
`;
const Combo = styled.label`
  display: flex;
  align-items: center;
  width: 40px;
  height: 24px;
  border: 2px solid #e8e5d8;
  background: #fff;
  color: #000;
`;
const ComboSelect = styled.select`
  appearance: none;
  flex: 1;
  min-width: 0;
  height: 18px;
  margin: 1px;
  padding-left: 2px;
  font: 12px/16px ${ui};
  border: ${(p) => (p.$fill ? '1px solid #000' : 0)};
  background: ${(p) => p.$fill || '#fff'};
`;
const ComboArrow = styled.span`
  display: grid;
  place-items: center;
  width: 16px;
  height: 20px;
  background: ${face};
  border: 1px solid #b0ac9c;
`;
const Readout = styled.p`
  margin: 0;
  padding-left: 3px;
  font: 12px/20px ${ui};
  white-space: nowrap;
`;

const g = '#00f01c';
const pal = [
  ['Open', <path d="M1.500 14V5.500h4l1 2h6v2M1.500 14l3-5h11l-3 5zM7 4c2-3 5-2 6 1M10.500 4.500h3v-3" stroke={g} />],
  ['Save', <path d="M1.500 1.500h13v13h-13zM4.500 2v6h7V2M4.500 14v-4h7v4M9.500 11v3" stroke={g} />],
  ['Screen', <><path d="M.5 1.500h15v10H.5zM4 4l8 6M12 3.500c-4 0-6 3-8 6" stroke={g} strokeWidth="1.300" /><path d="M7 12h2v1h3v2H4v-2h3z" fill={g} /></>],
  ['Paste', <path d="M7 13.500H1.500V3.500H4M10 3.500h2.500v4M4.500 1.500h5v3h-5zM7.500 7.500h5l3 3v5h-8zM3 6.500h8M3 9.500h3M9 11.500h4M9 13.500h5" stroke={g} />],
  ['Copy', <path d="M1.500 1.500h5l2 2v8h-7zM7.500 5.500h5l2 2v7h-7zM3 4.500h4M3 6.500h3M3 8.500h3M9 8.500h4M9 10.500h4M9 12.500h4" stroke={g} />],
  ['Select', <path d="M.5 3.500h15v10H.5z" stroke={g} strokeDasharray="2 1" />],
  ['Eraser', <path d="M1 10.500l7-7h7l-7 7zM1 10.500v3h7l7-7v-3M8 10.500v3M5 9l6-4M7 9l5-4" stroke={g} />],
  ['Picker', <><path d="M2 14l1-3 6-6 3 3-6 6z" stroke={g} /><path d="M8 4l4 4" stroke={g} strokeWidth="2" /><circle cx="12.500" cy="3.500" r="2.500" fill={g} /><path d="M0 15h8" stroke="#f00" strokeWidth="2" /></>],
  ['Fill', <><path d="M6 6l5-4 5 6-5 6-5-4z" stroke={g} strokeWidth="1.500" /><path d="M7 8l5-5M9 11l5-5M11 13l4-4" stroke="#f00" strokeWidth="1.300" /><path d="M1 14V7c2-4 5-3 7-1L4 8v6z" fill="#f00" /></>],
  ['Pencil', <><path d="M0 2.500h6" stroke="#f00" /><path d="M5 3l4 1 7 8-3 3-7-8zM7 7l2-3M8 7l5 6M10 6l5 6" stroke={g} /></>],
  ['Line', <path d="M2 3l11 11" stroke={g} />],
  ['Arrow', <path d="M2.500 3.500l11 11M2.500 8V3.500h5" stroke={g} />],
  ['Rectangle', <path d="M.5 2.500h15v11H.5z" stroke={g} />],
  ['Ellipse', <ellipse cx="8" cy="8" rx="7.500" ry="5.500" stroke={g} />],
  ['Solid rectangle', <path d="M0 2h16v12H0z" fill={g} />],
  ['Solid ellipse', <ellipse cx="8" cy="8" rx="8" ry="6" fill={g} />],
  ['Text', <path d="M4.500 15V7.500l2-3h3l2 3V15M4 11h8" stroke={g} strokeWidth="2.500" />, 1],
  ['Large text', <path d="M1.500 13V6l1-1.500h2l1 1.500v7M1.500 9.500h4M9.500 13V5l1.500-2h2l1.500 2v8M9.500 9h5" stroke={g} strokeWidth="1.700" />],
  ['Undo', <path d="M3 4v5.500h5.500M3.500 9L8 4.500c5-3 7 4 1.500 9.500" stroke={g} strokeWidth="2" />],
  ['Black and white', <path d="M.5.5h15v15H.5zM0 8.500h16M6.500 2v5M6 2.500h3.500v2H6.500h3v2H6M4.500 10v4h2v-4M6.500 14h3v-4M9.500 14h2v-4" stroke={g} />],
  ['Zoom', <><circle cx="6.500" cy="6.500" r="5" stroke={g} /><path d="M10 10l5 5" stroke={g} strokeWidth="2" /></>],
  ['Pointer', <path d="M4 4c3 1 6 5 9 9M3 13l6-5" stroke={g} strokeWidth="2.500" />, 1],
  ['Cursor', <path d="M4.500 1v11l3-2 3 5.500 2-1-3-5h3.500z" stroke={g} />, 1],
  ['Help', <path d="M4.500 6c0-6 8-5 7.500-.5 0 2-3 2-3 4.500H7c0-4 3-3 3-5s-3-2-3 1zM7 12h2v2H7z" stroke={g} strokeWidth="1.200" />],
];

export default function App() {
  return (
    <Page>
      <GlobalStyle />
      <TitleBar>
        <AppBadge>
          <Icon><path d="M2 8c2-5 5-6 12-6-3 3-5 6-10 6M2 13c1-3 3-5 9-7" stroke="#8aa06a" strokeWidth="1.500" /></Icon>
        </AppBadge>
        <AppTitle>7406533: Prime</AppTitle>
        <Strip aria-label="Shortcuts">
          <StripPad $w={14} $gap={2}>
            <Icon size={11} box="0 0 11 11">
              <path d="M0 0h11v11H0z" fill="#000" />
              <path d="M1 1h4v4H1z" fill="#e04040" /><path d="M6 1h4v4H6z" fill="#40c040" />
              <path d="M1 6h4v4H1z" fill="#4060f0" /><path d="M6 6h4v4H6z" fill="#f0e040" />
            </Icon>
          </StripPad>
          <StripPad $w={28} $gap={4} $bg="#4b3fd0">
            <StripButton type="button" $small aria-label="Folders"><Icon size={12}>{art.folder}</Icon></StripButton>
          </StripPad>
          <StripPad $w={36} $gap={1} $bg="#008080">
            <StripButton type="button" $small aria-label="Desktop">
              <Icon size={14}><path d="M1 1h14v14H1z" fill="#fff" /><path d="M3 4h9v9H3z" fill="#006a6a" /><path d="M6 6v5M8 5l5-3" stroke="#fff" strokeWidth="2" /></Icon>
            </StripButton>
          </StripPad>
          {shortcuts.map(([label, n]) => (
            <StripButton key={label} type="button" aria-label={label}><Icon>{art[n]}</Icon></StripButton>
          ))}
          <StripPad $w={24} $bg="#008080" />
        </Strip>
        <Captions>
          <Caption type="button" aria-label="Minimize"><Icon size={12} box="0 0 12 12"><path d="M2 9h6" stroke="#fff" strokeWidth="3" /></Icon></Caption>
          <Caption type="button" aria-label="Restore"><Icon size={12} box="0 0 12 12"><path d="M1.500 4.500h6v6h-6zM4 4V1.500h6.500V8H8" stroke="#fff" strokeWidth="1.500" /></Icon></Caption>
          <Caption type="button" $close aria-label="Close"><CloseX c="#fff" s={11} /></Caption>
        </Captions>
      </TitleBar>

      <MenuBar>
        <MenuIcon><Icon size={15}>{nodeIcons.root}</Icon></MenuIcon>
        {['File', 'View', 'Insert', 'Charts', 'Tools', 'Window', 'Help'].map((m) => <button key={m} type="button">{m}</button>)}
        <MdiButtons>
          <MdiButton type="button" aria-label="Minimize chart"><Icon size={9} box="0 0 9 9"><path d="M1 7.500h5" stroke="currentColor" strokeWidth="2" /></Icon></MdiButton>
          <MdiButton type="button" aria-label="Restore chart"><Icon size={10} box="0 0 10 10"><path d="M.5 3.500h6v6h-6zM3 3V1h6v6H7" stroke="currentColor" /></Icon></MdiButton>
          <MdiButton type="button" aria-label="Close chart"><CloseX c="currentColor" s={8} /></MdiButton>
        </MdiButtons>
      </MenuBar>

      <ToolRow $h={25}>
        <ToolGroup>
          <Grip />
          <T n="chartPlus" drop label="New chart" />
          <T n="profiles" drop label="Profiles" />
          <Sep />
          <T n="market" on label="Market Watch" />
          <T n="target" label="Data window" />
          <T n="nav" on label="Navigator" />
          <T n="terminal" label="Terminal" />
          <T n="tester" label="Strategy tester" />
          <Sep />
          <WideTool type="button"><ToolIcon n="order" />New Order</WideTool>
          <T n="warn" label="Alerts" />
          <WideTool type="button"><ToolIcon n="expert" size={17} />Expert Advisors</WideTool>
        </ToolGroup>
      </ToolRow>
      <ToolRow $h={27} $gap={3}>
        <ToolSet>
          <ToolGroup $raised>
            <Grip />
            <T n="cursor" on />
            <T n="cross" />
            <Sep />
            {['vline', 'hline', 'slash', 'channel', 'fib', 'fan', 'letter', 'label', 'rect'].map((n) => <T key={n} n={n} />)}
            <T n="marks" drop />
          </ToolGroup>
          <ToolGroup $raised>
            <Grip />
            {['M1', 'M5', 'M15', 'M30', 'H1', 'H4', 'D1', 'W1', 'MN'].map((p) => <Tool key={p} type="button" $text $on={p === 'H1'}>{p}</Tool>)}
          </ToolGroup>
        </ToolSet>
        <ToolSet>
          <ToolGroup $raised>
            <Grip />
            <T n="bars" on />
            <T n="candle" />
            <T n="line" />
            <Sep />
            <T n="zoomIn" />
            <T n="zoomOut" />
            <Sep />
            <T n="scroll" on />
            <T n="shift" on />
            <Sep />
            <T n="indicator" drop />
            <T n="time" drop />
            <T n="template" drop />
          </ToolGroup>
        </ToolSet>
      </ToolRow>

      <Workspace>
        <Side>
          <Panel>
            <PanelHead>
              <PanelTitle>Market Watch: 11:41:33</PanelTitle>
              <PanelClose type="button" aria-label="Close Market Watch"><CloseX s={6} /></PanelClose>
            </PanelHead>
            <Quotes>
              <Table>
                <thead><tr><th>Symbol</th><th>Bid</th><th>Ask</th></tr></thead>
                <tbody>
                  <tr>
                    <td><Pair><Icon size={11} box="0 0 11 11"><path d="M5.500 1L10 5.500H7.500V10h-4V5.500H1z" fill="#2cb53a" stroke="#0d6a18" /></Icon>EURUSD</Pair></td>
                    <Price $up>1.4722</Price><Price $up>1.4724</Price>
                  </tr>
                  <tr>
                    <td><Pair><Icon size={11} box="0 0 11 11"><path d="M5.500 10L10 5.500H7.500V1h-4v4.500H1z" fill="#e8603a" stroke="#8a2a10" /></Icon>USDCHF</Pair></td>
                    <Price>1.0307</Price><Price>1.0309</Price>
                  </tr>
                </tbody>
              </Table>
              <Scroll>
                <ScrollPart type="button" $h={15} aria-label="Scroll up"><Icon size={9} box="0 0 9 9"><path d="M1 6l3.500-3.500L8 6" stroke="#4d6185" strokeWidth="2" /></Icon></ScrollPart>
                <ScrollPart type="button" $h={9} aria-label="Scroll thumb" />
                <ScrollPart type="button" $h={16} $end aria-label="Scroll down"><Icon size={9} box="0 0 9 9"><path d="M1 3l3.500 3.500L8 3" stroke="#4d6185" strokeWidth="2" /></Icon></ScrollPart>
              </Scroll>
            </Quotes>
            <Tabs $h={20}>
              <SideTab type="button" $on>Symbols</SideTab>
              <SideTab type="button">Tick Chart</SideTab>
              <Tick />
            </Tabs>
          </Panel>
          <Panel $grow>
            <PanelHead>
              <PanelTitle>Navigator</PanelTitle>
              <PanelClose type="button" aria-label="Close Navigator"><CloseX s={6} /></PanelClose>
            </PanelHead>
            <Tree>
              <Branch $root><Icon size={15}>{nodeIcons.root}</Icon><NodeName>Prime4x</NodeName></Branch>
              <Folder name="Accounts" icon="accounts" />
              <Leaf name="7406533: Sorin Bolache" icon="user" end />
              <Folder name="Indicators" icon="plain" plus />
              <Folder name="Expert Advisors" icon="hat" plus />
              <Folder name="Custom Indicators" icon="custom" />
              {indicators.map((n, i) => <Leaf key={n} name={n} icon="custom" end={i === indicators.length - 1} />)}
              <Folder name="Scripts" icon="script" plus end />
            </Tree>
            <Tabs $h={19}>
              <SideTab type="button" $on>Common</SideTab>
              <SideTab type="button">Favorites</SideTab>
              <Tick />
            </Tabs>
          </Panel>
        </Side>

        <Desk>
          <ChartWindow>
            <Plot>
              <PriceDrawing />
              <PlotHead>
                <div>
                  <Legend>{'GBPJPY,H1  142.74 142.81 142.51 142.56'}</Legend>
                  <Spread>
                    <span>PRESENT SPREAD</span><span>7</span>
                    <span>PRESENT STOP LOSS</span><span>5</span>
                  </Spread>
                </div>
                <BigPrice>142.56</BigPrice>
              </PlotHead>
            </Plot>
            <Scale>
              {Array.from({ length: 20 }, (_, i) => <Mark key={i}>{i === 4 ? '' : (143.35 - i * 0.2).toFixed(2)}</Mark>)}
              <Tag $y={70} $bg="#ff0" $fg="#b8b890">143.03</Tag>
              <Tag $y={153} $bg="#00f" $fg="#fff">142.63</Tag>
              <Tag $y={167} $bg="#000" $fg="#fff">142.56</Tag>
              <Tag $y={791} $bg="#7b68ee">139.50</Tag>
            </Scale>
            <Plot>
              <MacdDrawing />
              <PlotHead><Legend>MACD(12,26,9) 0.287 0.291</Legend></PlotHead>
            </Plot>
            <Scale $flat>
              <Mark $tight>0.366</Mark>
              <ZeroMark>0.00</ZeroMark>
              <Mark $tight>-0.482</Mark>
            </Scale>
            <Times>{times.map((t) => <Time key={t}>{t}</Time>)}</Times>
          </ChartWindow>
          <ChartTabs>
            {charts.map((c, i) => <ChartTab key={c} type="button" $on={i === 0}>{c}</ChartTab>)}
            <Pager>
              <button type="button" aria-label="Previous tabs"><Icon size={4} h={7} box="0 0 4 7"><path d="M4 0v7L0 3.500z" fill="#a09d90" /></Icon></button>
              <button type="button" aria-label="Next tabs"><Icon size={4} h={7} box="0 0 4 7"><path d="M0 0v7l4-3.500z" fill="#000" /></Icon></button>
            </Pager>
          </ChartTabs>
        </Desk>
      </Workspace>

      <Banner>Please visit www.forEdu.com to get the full version e-Pointer.</Banner>

      <Dialog role="dialog" aria-label="Custom Indicator">
        <DialogHead>
          <DialogTitle>Custom Indicator - Period_Converter_Opt</DialogTitle>
          <DialogButton type="button">?</DialogButton>
          <DialogButton type="button" $close aria-label="Close dialog"><CloseX c="#fff" s={11} /></DialogButton>
        </DialogHead>
        <DialogBody>
          <DialogTabs>
            <DialogTab type="button" $on>Common</DialogTab>
            <DialogTab type="button">Inputs</DialogTab>
            <DialogTab type="button">Colors</DialogTab>
            <DialogTab type="button">Visualization</DialogTab>
          </DialogTabs>
          <TabPage>
            <CheckBox>Allow DLL imports</CheckBox>
            <CheckBox>Allow external experts imports</CheckBox>
          </TabPage>
          <DialogActions>
            <PushButton type="button">OK</PushButton>
            <PushButton type="button">Cancel</PushButton>
            <PushButton type="button">Reset</PushButton>
          </DialogActions>
        </DialogBody>
      </Dialog>
      <Pointer>
        <Icon size={36} box="0 0 36 36"><path d="M32 30L4 3M4 26V3h23" stroke="#00f" strokeWidth="2" /></Icon>
      </Pointer>
      <Note>Allow DLL trebuie sa fie obligatoriu bifat</Note>

      <Palette aria-label="E-Pointer">
        <PaletteHead>
          <PaletteTitle>E-Pointer</PaletteTitle>
          <PaletteClose type="button" aria-label="Close E-Pointer"><CloseX c="#fff" /></PaletteClose>
        </PaletteHead>
        <PaletteBody>
          <PaletteGrid>
            {pal.map(([label, d, on]) => (
              <PaletteTool key={label} type="button" $on={on} aria-label={label}><Icon>{d}</Icon></PaletteTool>
            ))}
          </PaletteGrid>
          <Combos>
            <Combo>
              <ComboSelect aria-label="Size" defaultValue="30"><option>30</option></ComboSelect>
              <ComboArrow><Icon size={7} h={4} box="0 0 5 3"><path d="M0 0h5L2.500 3z" fill="#000" /></Icon></ComboArrow>
            </Combo>
            <Combo>
              <ComboSelect aria-label="Color" $fill="#00f" defaultValue=""><option value="" aria-label="Blue" /></ComboSelect>
              <ComboArrow><Icon size={7} h={4} box="0 0 5 3"><path d="M0 0h5L2.500 3z" fill="#000" /></Icon></ComboArrow>
            </Combo>
          </Combos>
          <Readout>X:1202 Y:871</Readout>
          <Readout>LEN: 38</Readout>
        </PaletteBody>
      </Palette>
    </Page>
  );
}
